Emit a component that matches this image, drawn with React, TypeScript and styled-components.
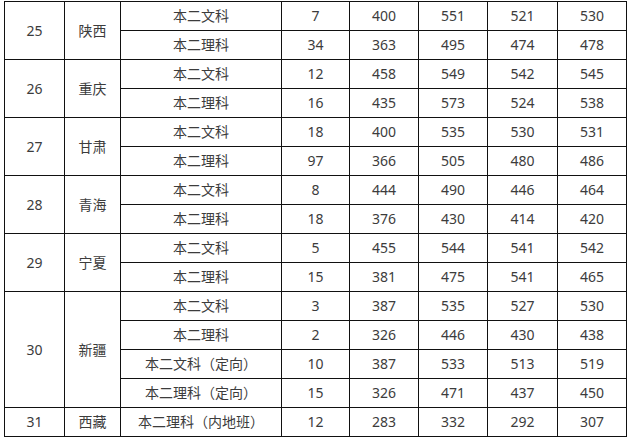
import { createGlobalStyle } from "styled-components";
import styled from "styled-components";

const GlobalStyle = createGlobalStyle`
  html, body {
    margin: 0;
    padding: 0;
    background: #fff;
  }
`;

const Page = styled.div`
  padding: 1px 0 0 4px;
`;

const Table = styled.table`
  border-collapse: collapse;
  table-layout: fixed;
  width: 622px;
  font-family: "Noto Sans", "Noto Sans CJK SC", sans-serif;
  font-size: 14px;
  line-height: 20px;
  color: #3c3c3c;
`;

const Cell = styled.td`
  border: 1px solid #111;
  height: 28px;
  padding: 0;
  text-align: center;
  vertical-align: middle;
  white-space: nowrap;
`;

type Row = [string, number, number, number, number, number];
type Province = { no: number; name: string; rows: Row[] };

const data: Province[] = [
  { no: 25, name: "陕西", rows: [["本二文科", 7, 400, 551, 521, 530], ["本二理科", 34, 363, 495, 474, 478]] },
  { no: 26, name: "重庆", rows: [["本二文科", 12, 458, 549, 542, 545], ["本二理科", 16, 435, 573, 524, 538]] },
  { no: 27, name: "甘肃", rows: [["本二文科", 18, 400, 535, 530, 531], ["本二理科", 97, 366, 505, 480, 486]] },
  { no: 28, name: "青海", rows: [["本二文科", 8, 444, 490, 446, 464], ["本二理科", 18, 376, 430, 414, 420]] },
  { no: 29, name: "宁夏", rows: [["本二文科", 5, 455, 544, 541, 542], ["本二理科", 15, 381, 475, 541, 465]] },
  {
    no: 30,
    name: "新疆",
    rows: [
      ["本二文科", 3, 387, 535, 527, 530],
      ["本二理科", 2, 326, 446, 430, 438],
      ["本二文科（定向）", 10, 387, 533, 513, 519],
      ["本二理科（定向）", 15, 326, 471, 437, 450],
    ],
  },
  { no: 31, name: "西藏", rows: [["本二理科（内地班）", 12, 283, 332, 292, 307]] },
];

const widths = [60, 56, 161, 68, 69, 69, 70, 69];

export default function App() {
  return (
    <>
      <GlobalStyle />
      <Page>
        <Table>
          <colgroup>
            {widths.map((w, i) => (
              <col key={i} style={{ width: w }} />
            ))}
          </colgroup>
          <tbody>
            {data.map((p) =>
              p.rows.map((r, i) => (
                <tr key={`${p.no}-${i}`}>
                  {i === 0 && (
                    <>
                      <Cell rowSpan={p.rows.length}>{p.no}</Cell>
                      <Cell rowSpan={p.rows.length}>{p.name}</Cell>
                    </>
                  )}
                  {r.map((v, j) => (
                    <Cell key={j}>{v}</Cell>
                  ))}
                </tr>
              ))
            )}
          </tbody>
        </Table>
      </Page>
    </>
  );
}
